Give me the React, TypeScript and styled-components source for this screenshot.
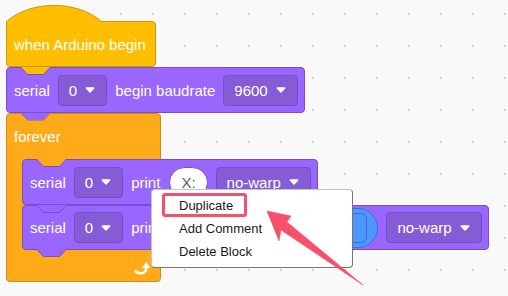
import React from 'react';
import styled, { createGlobalStyle } from 'styled-components';

const colors = {
  event: { fill: '#FFBF00', edge: '#CC9900' },
  control: { fill: '#FFAB19', edge: '#CF8B17' },
  looks: { fill: '#9966FF', edge: '#774DCB', field: '#855CD6' },
  sensing: { fill: '#4C97FF', edge: '#3373CC' },
  mark: '#F4516C',
};

const GlobalStyle = createGlobalStyle`
  html, body {
    margin: 0;
    padding: 0;
  }
  body {
    width: 508px;
    height: 296px;
    overflow: hidden;
    background-color: #f9f9f9;
    background-image: radial-gradient(circle, #cfcfcf 0 0.9px, transparent 1.3px);
    background-size: 32px 32px;
    background-position: 9px -2px;
    font-family: "Liberation Sans", Arial, sans-serif;
  }
`;

const Caret = () => (
  <svg width="10" height="6" viewBox="0 0 10 6">
    <path d="M1.2 1 L5 5 L8.8 1 Z" fill="#fff" stroke="#fff" strokeWidth="1.4" strokeLinejoin="round" />
  </svg>
);

// notch cut into the top of a block, showing the block above
const Notch = ({ fill, edge }: { fill: string; edge: string }) => (
  <NotchSvg width="32" height="9" viewBox="0 0 32 9">
    <path d="M0.5 0 L7.5 7.5 L23.5 7.5 L30.5 0 Z" fill={fill} />
    <path d="M0.5 0 L7.5 7.5 L23.5 7.5 L30.5 0" fill="none" stroke={edge} strokeWidth="1" />
  </NotchSvg>
);

// tab hanging below the last block of a stack
const Tab = ({ fill, edge }: { fill: string; edge: string }) => (
  <TabSvg width="32" height="9" viewBox="0 0 32 9">
    <path d="M0.5 0 L7.5 7.5 L23.5 7.5 L30.5 0 Z" fill={fill} />
    <path d="M0.5 0 L7.5 7.5 L23.5 7.5 L30.5 0" fill="none" stroke={edge} strokeWidth="1" />
  </TabSvg>
);

const LoopIcon = () => (
  <svg width="16" height="14" viewBox="0 0 16 14">
    <path
      d="M1.6 10.2 C4 12.4 8 13 10.4 11.2 C12 9.9 12.4 8.2 12.2 6.2"
      fill="none"
      stroke="#fff"
      strokeWidth="2.6"
      strokeLinecap="round"
    />
    <path d="M8.6 6.8 L12.3 1.4 L15.6 6.8 Z" fill="#fff" stroke="#fff" strokeWidth="0.8" strokeLinejoin="round" />
  </svg>
);

const Dropdown = ({ value }: { value: string }) => (
  <Field>
    <span>{value}</span>
    <Caret />
  </Field>
);

const App = () => {
  return (
    <>
      <GlobalStyle />
      <Canvas>
        <Script>
          <HatBody>
            <HatCap width="96" height="18" viewBox="0 0 96 18">
              <path d="M0.5 17 L0.5 16.5 C25 -5 71 -5 95.5 16.5 L95.5 17 Z" fill={colors.event.fill} />
              <path d="M0.5 16.5 C25 -5 71 -5 95.5 16.5" fill="none" stroke={colors.event.edge} strokeWidth="1" />
            </HatCap>
            when Arduino begin
          </HatBody>

          <Block $fill={colors.looks.fill} $edge={colors.looks.edge}>
            <Notch fill={colors.event.fill} edge={colors.looks.edge} />
            serial
            <Dropdown value="0" />
            begin baudrate
            <Dropdown value="9600" />
          </Block>

          <Forever>
            <Notch fill={colors.looks.fill} edge={colors.control.edge} />
            <ForeverHead>forever</ForeverHead>
            <Mouth>
              <Block $fill={colors.looks.fill} $edge={colors.looks.edge}>
                <Notch fill={colors.control.fill} edge={colors.looks.edge} />
                serial
                <Dropdown value="0" />
                print
                <TextSlot>X:</TextSlot>
                <Dropdown value="no-warp" />
              </Block>
              <Block $fill={colors.looks.fill} $edge={colors.looks.edge} $h={45}>
                <Notch fill={colors.looks.fill} edge={colors.looks.edge} />
                serial
                <Dropdown value="0" />
                print
                <Reporter>
                  <ReporterSlot />
                </Reporter>
                <Dropdown value="no-warp" />
                <Tab fill={colors.looks.fill} edge={colors.looks.edge} />
              </Block>
            </Mouth>
            <ForeverFoot>
              <LoopIcon />
            </ForeverFoot>
          </Forever>
        </Script>

        <Menu>
          <Highlight />
          <MenuItem>Duplicate</MenuItem>
          <MenuItem>Add Comment</MenuItem>
          <MenuItem>Delete Block</MenuItem>
        </Menu>

        <Pointer width="110" height="85" viewBox="0 0 110 85">
          <path
            d="M7 6 L31 11 L27 17 L103 80 L21 25 L19 36 Z"
            fill={colors.mark}
            stroke={colors.mark}
            strokeWidth="0.6"
            strokeLinejoin="round"
          />
        </Pointer>
      </Canvas>
    </>
  );
};

export default App;

const Canvas = styled.div`
  position: relative;
  width: 508px;
  height: 296px;
  box-sizing: border-box;
  padding: 21px 0 0 6px;
`;

const Script = styled.div`
  display: flex;
  flex-direction: column;
  align-items: flex-start;
`;

const Block = styled.div<{ $fill: string; $edge: string; $h?: number }>`
  position: relative;
  box-sizing: border-box;
  display: flex;
  align-items: center;
  gap: 8px;
  height: ${p => p.$h ?? 46}px;
  padding: 0 6px 0 7px;
  background: ${p => p.$fill};
  border: 1px solid ${p => p.$edge};
  border-radius: 4px;
  color: #fff;
  font-size: 15px;
  white-space: nowrap;
`;

const HatBody = styled(Block).attrs({ $fill: colors.event.fill, $edge: colors.event.edge })`
  padding-right: 9px;
  border-top-left-radius: 0;
`;

const HatCap = styled.svg`
  position: absolute;
  left: -1px;
  top: -17px;
`;

const NotchSvg = styled.svg`
  position: absolute;
  left: 13px;
  top: -1px;
  z-index: 2;
`;

const TabSvg = styled.svg`
  position: absolute;
  left: 13px;
  top: 100%;
  z-index: 2;
`;

const Field = styled.div`
  display: flex;
  align-items: center;
  gap: 8px;
  box-sizing: border-box;
  height: 31px;
  padding: 0 11px 0 10px;
  background: ${colors.looks.field};
  border: 1px solid ${colors.looks.edge};
  border-radius: 4px;
  color: #fff;
`;

const TextSlot = styled.div`
  display: flex;
  align-items: center;
  box-sizing: border-box;
  height: 31px;
  padding: 0 11px;
  margin-left: 1px;
  background: #fff;
  border: 1px solid ${colors.looks.edge};
  border-radius: 16px;
  color: #575e75;
`;

const Reporter = styled.div`
  display: flex;
  align-items: center;
  justify-content: flex-end;
  box-sizing: border-box;
  width: 209px;
  height: 40px;
  margin-left: 1px;
  padding-right: 10px;
  background: ${colors.sensing.fill};
  border: 1px solid ${colors.sensing.edge};
  border-radius: 20px;
`;

const ReporterSlot = styled.div`
  box-sizing: border-box;
  width: 120px;
  height: 30px;
  border: 1.5px solid ${colors.sensing.edge};
  border-radius: 6px;
`;

const Forever = styled.div`
  position: relative;
  box-sizing: border-box;
  width: 155px;
  background: ${colors.control.fill};
  border: 1px solid ${colors.control.edge};
  border-radius: 4px;
  color: #fff;
  font-size: 15px;
`;

const ForeverHead = styled.div`
  display: flex;
  align-items: center;
  height: 45px;
  padding-left: 7px;
`;

const Mouth = styled.div`
  display: flex;
  flex-direction: column;
  align-items: flex-start;
  padding-left: 15px;
`;

const ForeverFoot = styled.div`
  display: flex;
  align-items: center;
  justify-content: flex-end;
  box-sizing: border-box;
  height: 31px;
  padding: 4px 10px 0 0;
`;

const Menu = styled.div`
  position: absolute;
  left: 151px;
  top: 189px;
  z-index: 5;
  box-sizing: border-box;
  width: 202px;
  padding: 4px 0;
  background: #fff;
  border: 1px solid #c4c4c4;
  border-right-color: #747474;
  border-bottom-color: #747474;
  border-radius: 4px;
`;

const MenuItem = styled.div`
  height: 23px;
  line-height: 23px;
  padding-left: 27px;
  font-size: 13px;
  color: #1a1a1a;
`;

const Highlight = styled.span`
  position: absolute;
  left: 10px;
  top: 3px;
  box-sizing: border-box;
  width: 85px;
  height: 24px;
  border: 3px solid ${colors.mark};
  border-radius: 3px;
`;

const Pointer = styled.svg`
  position: absolute;
  left: 260px;
  top: 205px;
  z-index: 6;
`;
